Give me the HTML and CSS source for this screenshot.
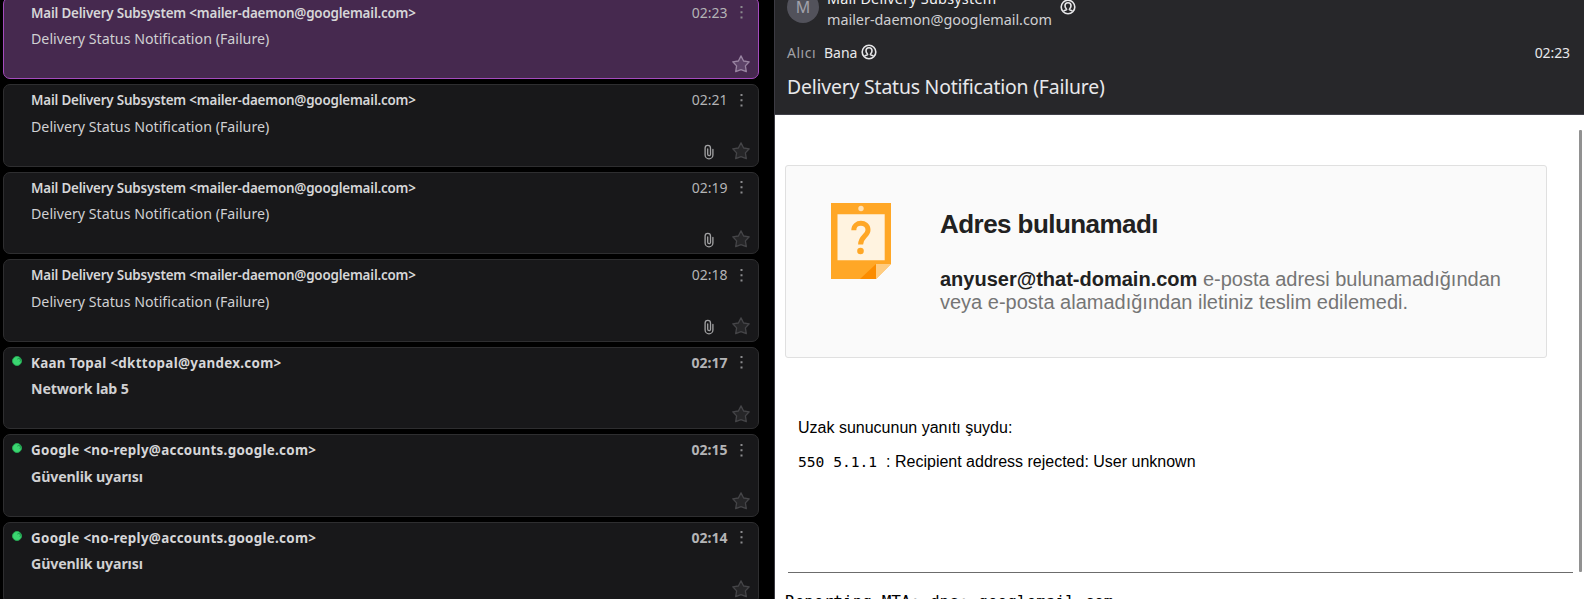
FILE: index.html
```
<!DOCTYPE html>
<html lang="tr">
<head>
<meta charset="utf-8">
<title>Posta</title>
<link rel="stylesheet" href="styles.css">
</head>
<body>
<svg class="defs" aria-hidden="true">
  <symbol id="star" viewBox="0 0 18 18"><path d="M9 .9 L11.6 6 L17.2 6.8 L13.4 10.9 L14.3 16.7 L9 14.6 L3.7 16.7 L4.6 10.9 L.8 6.8 L6.4 6 Z"/></symbol>
  <symbol id="dots" viewBox="0 0 3 13"><path d="M.5 0h2v2h-2zM.5 5.2h2v2h-2zM.5 10.4h2v2h-2z"/></symbol>
  <symbol id="clip" viewBox="0 0 10 16"><path d="M8.9 5.5V10.9a3.9 3.9 0 0 1-7.8 0V4a2.7 2.7 0 0 1 5.4 0V10.3a1.4 1.4 0 0 1-2.8 0V5"/></symbol>
  <symbol id="person" viewBox="0 0 16 16"><circle cx="8" cy="8" r="6.8"/><path d="M3.6 12.1C4.4 11.3 6.2 11.2 6.6 10.6C6.9 10.1 5 9.3 5 6.8a3 3 0 0 1 6 0c0 2.5-1.9 3.3-1.6 3.8c.4.6 2.2.7 3 1.5"/></symbol>
</svg>
<main class="app">
  <section class="list">
    <article class="card selected">
      <span class="name">Mail Delivery Subsystem &lt;mailer-daemon@googlemail.com&gt;</span><time>02:23</time><svg class="dots"><use href="#dots"/></svg>
      <span class="subject">Delivery Status Notification (Failure)</span>
      <div class="tools"><svg class="star"><use href="#star"/></svg></div>
    </article>
    <article class="card">
      <span class="name">Mail Delivery Subsystem &lt;mailer-daemon@googlemail.com&gt;</span><time>02:21</time><svg class="dots"><use href="#dots"/></svg>
      <span class="subject">Delivery Status Notification (Failure)</span>
      <div class="tools"><svg class="clip"><use href="#clip"/></svg><svg class="star"><use href="#star"/></svg></div>
    </article>
    <article class="card">
      <span class="name">Mail Delivery Subsystem &lt;mailer-daemon@googlemail.com&gt;</span><time>02:19</time><svg class="dots"><use href="#dots"/></svg>
      <span class="subject">Delivery Status Notification (Failure)</span>
      <div class="tools"><svg class="clip"><use href="#clip"/></svg><svg class="star"><use href="#star"/></svg></div>
    </article>
    <article class="card">
      <span class="name">Mail Delivery Subsystem &lt;mailer-daemon@googlemail.com&gt;</span><time>02:18</time><svg class="dots"><use href="#dots"/></svg>
      <span class="subject">Delivery Status Notification (Failure)</span>
      <div class="tools"><svg class="clip"><use href="#clip"/></svg><svg class="star"><use href="#star"/></svg></div>
    </article>
    <article class="card unread">
      <i class="dot"></i><span class="name">Kaan Topal &lt;dkttopal@yandex.com&gt;</span><time>02:17</time><svg class="dots"><use href="#dots"/></svg>
      <span class="subject">Network lab 5</span>
      <div class="tools"><svg class="star"><use href="#star"/></svg></div>
    </article>
    <article class="card unread">
      <i class="dot"></i><span class="name">Google &lt;no-reply@accounts.google.com&gt;</span><time>02:15</time><svg class="dots"><use href="#dots"/></svg>
      <span class="subject">Güvenlik uyarısı</span>
      <div class="tools"><svg class="star"><use href="#star"/></svg></div>
    </article>
    <article class="card unread">
      <i class="dot"></i><span class="name">Google &lt;no-reply@accounts.google.com&gt;</span><time>02:14</time><svg class="dots"><use href="#dots"/></svg>
      <span class="subject">Güvenlik uyarısı</span>
      <div class="tools"><svg class="star"><use href="#star"/></svg></div>
    </article>
  </section>
  <section class="reader">
    <header class="head">
      <div class="from">
        <div class="avatar">M</div>
        <div class="who"><span class="who-name">Mail Delivery Subsystem</span><span class="who-mail">mailer-daemon@googlemail.com</span></div>
        <svg class="person"><use href="#person"/></svg>
      </div>
      <div class="to"><span class="label">Alıcı</span><span class="me">Bana</span><svg class="person"><use href="#person"/></svg><span class="when">02:23</span></div>
      <h1>Delivery Status Notification (Failure)</h1>
    </header>
    <div class="body">
      <div class="content">
        <div class="notice">
          <svg class="note" viewBox="0 0 60 76">
            <path fill="#ffa726" d="M0 0h60v61L45 76H0z"/>
            <path fill="#fff3e0" d="M6.5 11.3h47.2v46H6.5z"/>
            <circle cx="30" cy="5.5" r="2.7" fill="#ffe0b2"/>
            <path fill="#fb8c00" d="M45 61v15H29z"/>
            <path fill="#ffcc80" d="M45 61h15L45 76z"/>
            <path fill="none" stroke="#ffa726" stroke-width="5" d="M22.8 27.2C22.8 18 37 18 37 27C37 33 29.6 33.5 29.6 41.5"/>
            <circle cx="29.5" cy="48" r="3.3" fill="#ffa726"/>
          </svg>
          <div class="notice-text">
            <h2>Adres bulunamadı</h2>
            <p><b>anyuser@that-domain.com</b> e-posta adresi bulunamadığından<br>veya e-posta alamadığından iletiniz teslim edilemedi.</p>
          </div>
        </div>
        <p class="reply">Uzak sunucunun yanıtı şuydu:</p>
        <p class="error"><code>550 5.1.1</code><span>: Recipient address rejected: User unknown</span></p>
        <hr>
        <pre>Reporting-MTA: dns; googlemail.com</pre>
      </div>
      <div class="scrollbar"></div>
    </div>
  </section>
</main>
</body>
</html>
```
FILE: styles.css
```
* { box-sizing: border-box; }
body { margin: 0; height: 599px; overflow: hidden; background: #000; font-family: "Noto Sans", sans-serif; }
.defs { position: absolute; width: 0; height: 0; }
.app { display: flex; height: 599px; overflow: hidden; }
.list { flex: none; width: 774px; padding-left: 3px; display: flex; flex-direction: column; gap: 5px; margin-top: -3.5px; height: 603px; overflow: hidden; }
.card { position: relative; flex: none; width: 756px; height: 82.5px; padding: 5px 15.5px 0 27px; border: 1px solid #2e2e30; border-radius: 7px; background: #18181a; color: #d6d6d8; display: grid; grid-template-columns: 1fr auto 3px; grid-template-rows: 21px 29.5px 22px; }
.card.selected { background: #46294f; border-color: #a44bbd; }
.name { font-size: 13.4px; font-weight: 600; line-height: 20px; white-space: nowrap; letter-spacing: -0.185px; }
time { font-size: 14px; line-height: 20px; color: #b4b4b6; margin-right: 12px; }
.dots { width: 3px; height: 13px; fill: #8b8b8e; margin-top: 3.5px; }
.subject { grid-column: 1 / 4; font-size: 14.2px; line-height: 30px; color: #d0d0d2; white-space: nowrap; letter-spacing: 0.015px; }
.card:nth-child(even) .subject { line-height: 31px; }
.tools { grid-column: 1 / 4; display: flex; justify-content: flex-end; align-items: center; gap: 18px; margin-right: -7.5px; }
.star { width: 18px; height: 18px; fill: #262628; stroke: #454548; stroke-width: 1.3; stroke-linejoin: round; }
.card:nth-child(even) .tools { margin-top: -1px; margin-bottom: 1px; }
.selected .star { fill: #5d4368; stroke: #9a85a2; }
.clip { width: 10px; height: 16px; margin-top: 2px; fill: none; stroke: #a2a2a4; stroke-width: 1.3; stroke-linecap: round; }
.unread .name, .unread time, .unread .subject { font-weight: 700; }
.unread .name { letter-spacing: 0.29px; }
.unread .subject { letter-spacing: -0.14px; }
.dot { position: absolute; left: 8px; top: 8px; width: 10px; height: 10px; border-radius: 50%; background: #3bd671; border: 1px solid #25a653; }
.dot::after { content: ""; position: absolute; left: 4px; top: 1px; width: 3px; height: 3px; border-top: 1px solid #1d994b; border-right: 1px solid #1d994b; border-radius: 50%; }
.reader { flex: 1; min-width: 0; height: 599px; border-left: 1px solid #3c3b43; display: flex; flex-direction: column; background: #fff; }
.head { flex: none; height: 115px; overflow: hidden; background: #27272a; border-bottom: 1px solid #414149; padding: 0 14px 0 12px; color: #e8e8ea; }
.from { display: flex; height: 40px; margin-top: -11px; }
.avatar { width: 32px; height: 32px; margin-top: 2px; border-radius: 50%; background: #52525b; color: #a1a1aa; font-size: 16px; line-height: 32px; text-align: center; }
.who { display: flex; flex-direction: column; margin-left: 8px; font-size: 14.4px; line-height: 21px; white-space: nowrap; }
.who-name { color: #f2f2f4; line-height: 20px; letter-spacing: 0.22px; }
.who-mail { color: #cfcfd2; letter-spacing: -0.02px; }
.person { width: 16px; height: 16px; fill: none; stroke: #e6e6e8; stroke-width: 1.6; }
.from .person { margin: 9.5px 0 0 8px; }
.to { display: flex; align-items: center; height: 24px; margin-top: 11px; font-size: 14px; }
.label { color: #a1a1a6; width: 37px; letter-spacing: 0.5px; }
.me { margin-right: 4px; }
.when { margin-left: auto; letter-spacing: -0.1px; }
h1 { margin: 9px 0 0; font-size: 19.4px; letter-spacing: -0.19px; line-height: 28px; font-weight: 400; white-space: nowrap; }
.body { flex: 1; display: flex; min-height: 0; font-family: "Liberation Sans", Arial, sans-serif; color: #000; }
.content { flex: 1; padding: 50px 0 0 10px; overflow: hidden; }
.notice { width: 762px; height: 193px; border: 1px solid #e0e0e0; border-radius: 3px; background: #fafafa; display: flex; padding: 37px 0 0 45px; }
.note { flex: none; width: 60px; height: 76px; }
.notice-text { margin-left: 49px; white-space: nowrap; }
h2 { margin: 6px 0 0; font-size: 26px; letter-spacing: -0.55px; line-height: 30px; color: #212121; }
.notice-text p { margin: 29px 0 0; font-size: 20px; line-height: 23px; color: #757575; }
.notice-text b { color: #212121; }
.reply { margin: 61px 0 0 13px; font-size: 16px; line-height: 18px; }
.error { display: flex; margin: 16px 0 0 13px; font-size: 16px; line-height: 18px; }
.error span { margin-left: 9px; }
code { font: 14.6px/18px "DejaVu Sans Mono", monospace; }
hr { margin: 101px 6px 0 3px; border: 0; height: 1px; background: #6c6c6c; }
pre { margin: 19px 0 0; font: 16px/19px "DejaVu Sans Mono", monospace; letter-spacing: 0.03px; }
.scrollbar { flex: none; width: 3px; height: 442px; margin: 15px 2px 0 0; background: #919191; border-radius: 1px; }
```
